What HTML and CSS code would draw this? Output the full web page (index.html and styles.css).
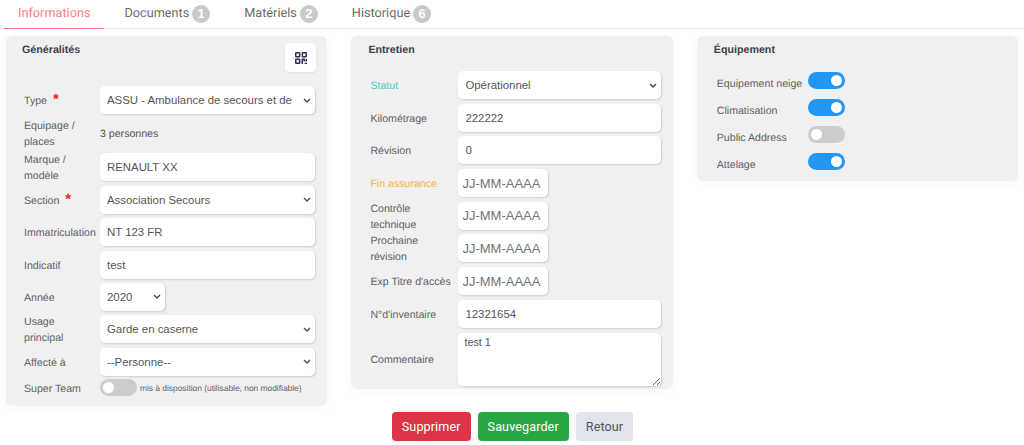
FILE: index.html
```html
<!DOCTYPE html>
<html lang="fr">
<head>
<meta charset="utf-8">
<title>Véhicule</title>
<link rel="stylesheet" href="styles.css">
</head>
<body>
<nav class="tabs">
  <a class="tab active">Informations</a>
  <a class="tab">Documents <span class="badge">1</span></a>
  <a class="tab">Matériels <span class="badge">2</span></a>
  <a class="tab">Historique <span class="badge">6</span></a>
</nav>
<main class="cols">
  <section class="card card-gen">
    <div class="card-head">
      <h3>Généralités</h3>
      <button class="qr" type="button" aria-label="QR code">
        <svg width="12" height="12" viewBox="0 0 12 12" fill="none" stroke="#2c2a50" stroke-width="1.5">
          <rect x="0.75" y="0.75" width="3.9" height="3.9" rx="0.5"/>
          <rect x="7.35" y="0.75" width="3.9" height="3.9" rx="0.5"/>
          <rect x="0.75" y="7.35" width="3.9" height="3.9" rx="0.5"/>
          <path d="M7.2 12V7.35H9.2V9.5M11.25 7V9.6M9.6 11.4H12" />
        </svg>
      </button>
    </div>
    <div class="row"><label>Type <span class="req">*</span></label>
      <select class="ctl"><option>ASSU - Ambulance de secours et de soins d'urgence</option></select></div>
    <div class="row row-text"><label>Equipage /<br>places</label><span class="static">3 personnes</span></div>
    <div class="row"><label>Marque /<br>modèle</label><input class="ctl" value="RENAULT XX"></div>
    <div class="row"><label>Section <span class="req">*</span></label>
      <select class="ctl"><option>Association Secours</option></select></div>
    <div class="row"><label>Immatriculation</label><input class="ctl" value="NT 123 FR"></div>
    <div class="row"><label>Indicatif</label><input class="ctl" value="test"></div>
    <div class="row"><label>Année</label><select class="ctl ctl-year"><option>2020</option></select></div>
    <div class="row"><label>Usage<br>principal</label><select class="ctl"><option>Garde en caserne</option></select></div>
    <div class="row"><label>Affecté à</label><select class="ctl"><option>--Personne--</option></select></div>
    <div class="row row-switch"><label>Super Team</label><span class="switch"></span><small>mis à disposition (utilisable, non modifiable)</small></div>
  </section>
  <section class="card card-ent">
    <h3 class="title">Entretien</h3>
    <div class="row"><label class="teal">Statut</label><select class="ctl"><option>Opérationnel</option></select></div>
    <div class="row"><label>Kilométrage</label><input class="ctl" value="222222"></div>
    <div class="row"><label>Révision</label><input class="ctl" value="0"></div>
    <div class="row"><label class="orange">Fin assurance</label><input class="ctl date" value="JJ-MM-AAAA"></div>
    <div class="row"><label>Contrôle<br>technique</label><input class="ctl date" value="JJ-MM-AAAA"></div>
    <div class="row"><label>Prochaine<br>révision</label><input class="ctl date" value="JJ-MM-AAAA"></div>
    <div class="row"><label>Exp Titre d'accès</label><input class="ctl date" value="JJ-MM-AAAA"></div>
    <div class="row"><label>N°d'inventaire</label><input class="ctl" value="12321654"></div>
    <div class="row row-last"><label>Commentaire</label><textarea class="ctl area">test 1</textarea></div>
  </section>
  <section class="card card-eq">
    <h3 class="title">Équipement</h3>
    <div class="eq"><label>Equipement neige</label><span class="switch on"></span></div>
    <div class="eq"><label>Climatisation</label><span class="switch on"></span></div>
    <div class="eq"><label>Public Address</label><span class="switch"></span></div>
    <div class="eq"><label>Attelage</label><span class="switch on"></span></div>
  </section>
</main>
<div class="actions">
  <button class="btn red" type="button">Supprimer</button>
  <button class="btn green" type="button">Sauvegarder</button>
  <button class="btn light" type="button">Retour</button>
</div>
</body>
</html>
```
FILE: styles.css
```css
* { box-sizing: border-box; }
html, body { margin: 0; height: 445px; overflow: hidden; background: #fff; }
body { font-family: Roboto, "Liberation Sans", sans-serif; color: #5c5a66; text-rendering: geometricPrecision; }

.tabs { display: flex; gap: 6px; height: 29px; padding-left: 4px; border-bottom: 1px solid #e6e6e6; }
.tab { display: flex; align-items: center; gap: 3px; height: 29px; padding: 0 14px 2px; font-size: 12.7px; color: #6b6b6b; }
.tab.active { color: #fb7f85; border-bottom: 1px solid #fb6f76; }
.badge { width: 18px; height: 18px; border-radius: 50%; background: #c9c9c9; color: #fff; font: bold 13px/18px "Liberation Sans", sans-serif; text-align: center; }

.cols { display: grid; grid-template-columns: repeat(3, 321.4px); gap: 24px; align-items: start; padding: 7px 0 0 6px; }
.card { background: #f0f0f0; border-radius: 6px; box-shadow: 0 2px 10px rgba(0,0,0,.035); }
.card-gen { padding: 7px 12px 0 18px; height: 370px; }
.card-ent { padding: 7px 12px 0 19px; height: 353px; }
.card-eq { padding: 7px 12px 0 17px; height: 145px; }

h3 { margin: 0; padding-top: 1px; font: bold 10.7px/13px "Liberation Sans", sans-serif; color: #3f3e4c; }
.card-head { display: flex; justify-content: space-between; height: 43px; }
.card-head h3 { margin-left: -2px; }
.title { height: 28px; margin-left: -2px; }
.card-eq .title { height: 29px; margin-left: 0; }

.qr { display: flex; align-items: center; justify-content: center; width: 31px; height: 29px; margin-right: -1px; padding: 0; border: 0; border-radius: 4px; background: #fff; box-shadow: 0 1px 2px rgba(0,0,0,.08); }

.row { display: flex; align-items: center; min-height: 28px; margin-bottom: 4.4px; }
.card-ent .row { margin-bottom: 4.7px; }
.row label { flex: none; width: 76px; margin: -3px 0; padding-top: 2px; font: 10.6px/16px "Liberation Sans", sans-serif; color: #5f5e6b; }
.card-ent .row label { width: 88px; }
.row label.teal { color: #4dccbd; }
.row label.orange { color: #fbb03b; }
.req { color: #f01e2c; font-size: 15px; font-weight: bold; margin-left: 3px; line-height: 10px; }

.ctl { width: 215px; height: 28px; border: 0; border-radius: 5px; background-color: #fff; box-shadow: 1px 1px 2px rgba(0,0,0,.14); font: 11.4px "Liberation Sans", sans-serif; color: #555; padding: 0 7px; outline: 0; }
.card-ent .ctl { width: 203px; }
select.ctl { appearance: none; padding: 0 20px 0 7px; background-image: url("data:image/svg+xml,%3Csvg xmlns='http://www.w3.org/2000/svg' width='8' height='5' viewBox='0 0 8 5'%3E%3Cpath d='M1 1l3 3 3-3' fill='none' stroke='%23444' stroke-width='1.3'/%3E%3C/svg%3E"); background-repeat: no-repeat; background-position: right 4px center; }
.card-gen .ctl-year { width: 65px; }
.card-ent .date { width: 90px; padding: 0 4px; font-size: 13px; color: #6c757d; }
.card-ent .area { display: block; height: 53px; padding: 3px 6px; font-size: 10.8px; resize: vertical; }

.row-text { min-height: 30px; margin-bottom: 5px; }
.static { padding-top: 1px; font: 10.6px "Liberation Sans", sans-serif; color: #555; }
.row-switch { min-height: 16px; margin-top: -1px; margin-bottom: 0; }
.row-switch small { margin-left: 3px; font: 8.4px "Liberation Sans", sans-serif; color: #5f5e6b; }

.switch { position: relative; flex: none; display: block; width: 37px; height: 17px; border-radius: 9px; background: #ccc; }
.switch::before { content: ""; position: absolute; left: 3px; top: 3px; width: 11px; height: 11px; border-radius: 50%; background: #fff; }
.switch.on { background: #2196f3; }
.switch.on::before { left: auto; right: 3px; }

.eq { display: flex; align-items: center; height: 17px; margin-bottom: 10px; padding-left: 3px; }
.eq label { width: 91px; flex: none; font: 10.6px "Liberation Sans", sans-serif; color: #5f5e6b; padding-top: 6px; }

.actions { display: flex; justify-content: center; gap: 7px; padding: 0 0 0 1px; position: relative; top: 6px; }
.btn { height: 29px; padding: 0 10px; border: 0; border-radius: 4px; font: 12.6px Roboto, "Liberation Sans", sans-serif; letter-spacing: .1px; }
.red { background: #dc3545; color: #fff; }
.green { background: #28a745; color: #fff; }
.light { background: #e2e4ee; color: #555; }
```
